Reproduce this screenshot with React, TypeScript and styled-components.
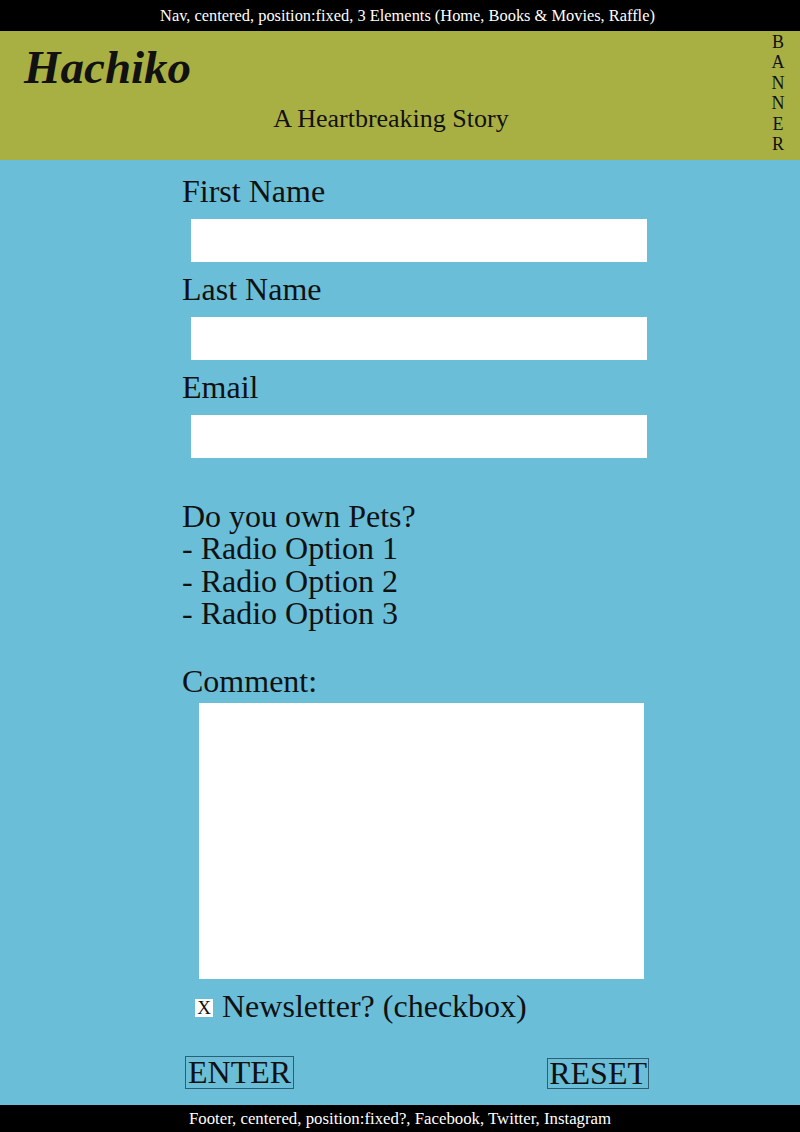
import { createGlobalStyle } from "styled-components";
import styled from "styled-components";

const GlobalStyle = createGlobalStyle`
  html, body {
    margin: 0;
    padding: 0;
  }
  body {
    background: #6abed8;
    font-family: "Liberation Serif", "Times New Roman", serif;
    color: #111;
  }
`;

const Nav = styled.nav`
  position: fixed;
  top: 0;
  left: 0;
  right: 0;
  height: 31px;
  padding-left: 15px;
  background: #000;
  color: #fff;
  font-size: 16.4px;
  line-height: 31px;
  text-align: center;
`;

const Banner = styled.header`
  margin-top: 31px;
  height: 129px;
  background: #a9b043;
  display: grid;
  grid-template-columns: 1fr 44px;
`;

const Titles = styled.div`
  padding-top: 10px;
`;

const Title = styled.h1`
  margin: 0;
  padding-left: 24px;
  font-size: 47px;
  line-height: 52px;
  font-weight: bold;
  font-style: italic;
`;

const Subtitle = styled.p`
  margin: 11px 0 0;
  padding-left: 26px;
  font-size: 26px;
  line-height: 29px;
  text-align: center;
`;

const BannerTag = styled.div`
  display: flex;
  flex-direction: column;
  align-items: center;
  padding-top: 1px;
  font-size: 18px;
  line-height: 20.4px;
`;

const Main = styled.main`
  padding: 14px 0 0 182px;
`;

const Form = styled.form`
  width: 467px;
  font-size: 32px;
`;

const Field = styled.div`
  margin-bottom: 10px;
`;

const Label = styled.label`
  display: block;
  line-height: 35px;
`;

const TextInput = styled.input`
  display: block;
  box-sizing: border-box;
  margin: 10px 0 0 9px;
  width: 456px;
  height: 43px;
  border: none;
  background: #fff;
  padding: 0 8px;
`;

const Pets = styled.p`
  margin: 42px 0 0;
  line-height: 32.4px;
`;

const CommentLabel = styled.label`
  display: block;
  margin-top: 34px;
  line-height: 35px;
`;

const CommentBox = styled.textarea`
  display: block;
  box-sizing: border-box;
  margin: 4px 0 0 17px;
  width: 445px;
  height: 276px;
  border: none;
  resize: none;
  background: #fff;
`;

const CheckRow = styled.div`
  display: flex;
  align-items: center;
  margin-top: 10px;
  padding-left: 13px;
  line-height: 35px;
`;

const CheckBox = styled.span`
  display: inline-flex;
  align-items: center;
  justify-content: center;
  width: 18px;
  height: 18px;
  margin: 3px 9px 0 0;
  background: #fff;
  font-size: 19px;
  line-height: 18px;
`;

const ButtonRow = styled.div`
  display: flex;
  justify-content: space-between;
  align-items: flex-end;
  margin: 32px 0 0 3px;
  width: 464px;
`;

const Button = styled.button<{ $tall?: boolean }>`
  font-family: inherit;
  font-size: 32px;
  line-height: 29px;
  color: #111;
  background: transparent;
  border: 1px solid #2c5f74;
  padding: ${(p) => (p.$tall ? "1px 2px 1px" : "0 1px 0")};
  margin: 0;
`;

const Footer = styled.footer`
  position: fixed;
  left: 0;
  right: 0;
  bottom: 0;
  height: 27px;
  background: #000;
  color: #fff;
  font-size: 16.8px;
  line-height: 27px;
  text-align: center;
`;

const fields = ["First Name", "Last Name", "Email"];
const options = ["Radio Option 1", "Radio Option 2", "Radio Option 3"];

export default function App() {
  return (
    <>
      <GlobalStyle />
      <Nav>Nav, centered, position:fixed, 3 Elements (Home, Books &amp; Movies, Raffle)</Nav>
      <Banner>
        <Titles>
          <Title>Hachiko</Title>
          <Subtitle>A Heartbreaking Story</Subtitle>
        </Titles>
        <BannerTag>
          {"BANNER".split("").map((c, i) => (
            <span key={i}>{c}</span>
          ))}
        </BannerTag>
      </Banner>
      <Main>
        <Form onSubmit={(e) => e.preventDefault()}>
          {fields.map((f) => (
            <Field key={f}>
              <Label>{f}</Label>
              <TextInput type="text" />
            </Field>
          ))}
          <Pets>
            Do you own Pets?
            {options.map((o) => (
              <span key={o}>
                <br />- {o}
              </span>
            ))}
          </Pets>
          <CommentLabel>Comment:</CommentLabel>
          <CommentBox />
          <CheckRow>
            <CheckBox>X</CheckBox>
            Newsletter? (checkbox)
          </CheckRow>
          <ButtonRow>
            <Button type="submit" $tall>ENTER</Button>
            <Button type="reset">RESET</Button>
          </ButtonRow>
        </Form>
      </Main>
      <Footer>Footer, centered, position:fixed?, Facebook, Twitter, Instagram</Footer>
    </>
  );
}
